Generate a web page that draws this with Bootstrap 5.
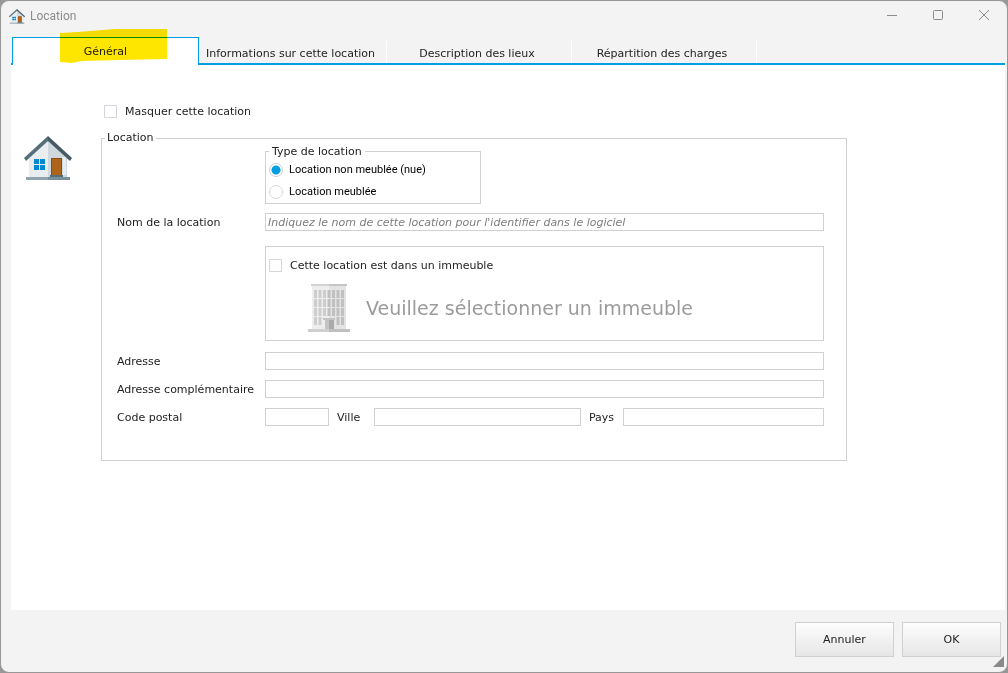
<!DOCTYPE html>
<html lang="fr">
<head>
<meta charset="utf-8">
<meta name="viewport" content="width=device-width, initial-scale=1">
<title>Location</title>
<link href="https://cdn.jsdelivr.net/npm/bootstrap@5.3.0/dist/css/bootstrap.min.css" rel="stylesheet">
<style>
:root { --accent: #009fe3; --line: #cfd0d4; --chrome: #f3f3f3; }
body { background: #979797; color: #222; font: 11px/16px "DejaVu Sans", sans-serif; }
.window { background: var(--chrome); border: 1px solid #979797; border-radius: 9px; }
.titlebar { height: 30px; padding: 0 0 0 8px; color: #8c8c8c; font: 12px/16px Roboto, sans-serif; }
.titlebar span { padding-left: 5px; }
.caption-btn { width: 46px; height: 28px; padding: 0; border: 0; background: none; color: #8c8c8c; line-height: 0; }
.tabs { margin: 6px 2px 0 10px; border-bottom: 2px solid var(--accent); height: 28px; }
.tabs .nav-item { width: 185px; border-right: 1px solid #fff; margin-top: 4px; }
.tabs .nav-item:nth-child(2) { width: 188px; }
.tabs .nav-item:first-child { width: 187px; margin: 0 0 0 1px; border: 0; }
.tabs .nav-link { width: 100%; height: 22px; margin: 0; padding: 3px 4px 0 0; border: 0; border-radius: 0; background: none; color: #222; }
.tabs .nav-link.active { height: 28px; padding: 0; border: 1px solid var(--accent); border-bottom: 0; background: #fff; color: #222; }
.marker { left: 48px; top: -8px; width: 108px; height: 35px; mix-blend-mode: multiply; pointer-events: none; }
.panel { background: #fff; margin: 0 2px 0 10px; padding: 37px 14px 24px 13px; }
.side { width: 77px; padding-top: 34px; }
.form-zone { max-width: 746px; }
.form-zone label { padding-top: 2px; }
.form-check-input { width: 13px; height: 13px; margin: 0; border: 1px solid #d5d6dd; float: none; flex: none; }
.form-check-input[type=checkbox] { border-radius: 0; }
.form-check-input[type=radio]:checked { background-color: #fff; border-color: var(--line);
  background-image: radial-gradient(circle, var(--accent) 4px, transparent 5px); }
fieldset { border: 1px solid var(--line); }
fieldset > legend { float: none; width: auto; margin: 0; font-size: 11px; line-height: 12px; }
.hide-row { padding-left: 3px; margin-bottom: 12px; }
.group { padding: 0 22px 34px 15px; }
.group > legend { margin-left: -12px; padding: 0 2px; }
.kind { width: 216px; height: 60px; padding: 6px 3px 0; margin: 0 0 9px 148px; }
.kind > legend { padding: 1px 3px 0; line-height: 13px; margin-bottom: -1px; }
.kind .form-check-input { width: 14px; height: 14px; }
.kind label { padding: 0 0 0 6px; font: 11px/14px Roboto, sans-serif; color: #000; }
.name-label { width: 148px; flex: none; }
.form-control { height: 18px; min-height: 0; padding: 0 2px; border: 1px solid var(--line); border-radius: 0; font-size: 11px; line-height: 16px; }
.form-control::placeholder { color: #7d7d7d; font-style: italic; }
.building { border: 1px solid var(--line); height: 95px; margin: 15px 0 11px 148px; padding: 9px 3px 0; }
.pick-row { margin: 10px 0 0 23px; }
.pick { color: #9b9b9b; font-size: 19px; line-height: 24px; }
.rows { gap: 10px; }
.cp { width: 64px; }
.city { flex: 207 1 0; }
.country { flex: 201 1 0; }
.city-label { width: 37px; }
.country-label { width: 34px; }
.actions { padding: 12px 6px 15px; gap: 8px; }
.actions .btn { width: 99px; height: 35px; padding: 1px 0 0; border: 1px solid #d0d0d0; border-radius: 0; color: #222; font-size: 11px; background: linear-gradient(#fdfdfd, #e6e6e6); }
.grip { right: 3px; bottom: 5px; width: 11px; height: 11px; }
</style>
</head>
<body>
<svg class="d-none" aria-hidden="true">
  <symbol id="house" viewBox="0 0 48 45">
    <path fill="#e9edef" d="M5 22 24 4v37H5z"/>
    <path fill="#cfd8dc" d="M24 4 43 22v19H24z"/>
    <path fill="#e9edef" d="M39 21h3v18h-3z"/>
    <path fill="#546e7a" d="M24 0 0 22l2 3L24 5z"/>
    <path fill="#455a64" d="M24 0l24 22-2 3L24 5z"/>
    <path fill="#0288d1" d="M10 23h5v5h-5zM16 23h5v5h-5zM10 29h5v5h-5zM16 29h5v5h-5z"/>
    <path fill="#8d4e12" d="M27 22h11v18H27z"/>
    <path fill="#ad651c" d="M28 23h9v17h-9z"/>
    <path fill="#90a4ae" d="M2 41h22v3H2z"/>
    <path fill="#78909c" d="M24 41h22v3H24z"/>
    <path fill="#546e7a" d="M26 39h13v2H26z"/>
  </symbol>
</svg>

<div class="window d-flex flex-column min-vh-100 position-relative">
  <header class="titlebar d-flex align-items-center">
    <svg width="16" height="15" aria-hidden="true"><use href="#house"/></svg>
    <span class="me-auto">Location</span>
    <button class="caption-btn" type="button" aria-label="Réduire"><svg width="12" height="12" fill="none" stroke="currentColor"><path d="M1 5.500h10"/></svg></button>
    <button class="caption-btn" type="button" aria-label="Agrandir"><svg width="12" height="12" fill="none" stroke="currentColor"><rect x="1.500" y="0.500" width="9" height="9" rx="1"/></svg></button>
    <button class="caption-btn" type="button" aria-label="Fermer"><svg width="12" height="12" fill="none" stroke="currentColor"><path d="M1 0l10 10M11 0 1 10"/></svg></button>
  </header>

  <ul class="nav tabs flex-nowrap" role="tablist">
    <li class="nav-item position-relative" role="presentation">
      <button class="nav-link active" type="button" role="tab" aria-selected="true">Général</button>
      <svg class="marker position-absolute" viewBox="0 0 108 35" aria-hidden="true"><path fill="#ffe600" d="M0 4 18 3 55 0H107V30L60 31 22 32 12 34 0 33z"/></svg>
    </li>
    <li class="nav-item" role="presentation"><button class="nav-link" type="button" role="tab">Informations sur cette location</button></li>
    <li class="nav-item" role="presentation"><button class="nav-link" type="button" role="tab">Description des lieux</button></li>
    <li class="nav-item" role="presentation"><button class="nav-link" type="button" role="tab">Répartition des charges</button></li>
  </ul>

  <main class="panel d-flex flex-grow-1">
    <div class="side flex-shrink-0">
      <svg width="48" height="45" aria-hidden="true"><use href="#house"/></svg>
    </div>
    <form class="form-zone flex-grow-1">
      <div class="hide-row d-flex align-items-center">
        <input class="form-check-input" type="checkbox" id="hide">
        <label class="ms-2" for="hide">Masquer cette location</label>
      </div>
      <fieldset class="group">
        <legend>Location</legend>
        <fieldset class="kind">
          <legend>Type de location</legend>
          <div class="d-flex align-items-center">
            <input class="form-check-input" type="radio" name="kind" id="bare" checked>
            <label for="bare">Location non meublée (nue)</label>
          </div>
          <div class="d-flex align-items-center mt-2">
            <input class="form-check-input" type="radio" name="kind" id="furnished">
            <label for="furnished">Location meublée</label>
          </div>
        </fieldset>
        <div class="d-flex align-items-center">
          <label class="name-label" for="name">Nom de la location</label>
          <input class="form-control" id="name" type="text" placeholder="Indiquez le nom de cette location pour l'identifier dans le logiciel">
        </div>
        <div class="building">
          <div class="d-flex align-items-center">
            <input class="form-check-input" type="checkbox" id="inBuilding">
            <label class="ms-2" for="inBuilding">Cette location est dans un immeuble</label>
          </div>
          <div class="pick-row d-flex align-items-center">
            <svg class="mx-3" width="42" height="48" aria-hidden="true">
              <path fill="#eee" d="M4 2h17v44H4z"/><path fill="#e3e3e3" d="M21 2h17v44H21z"/>
              <path fill="#d3d3d3" d="M3 0h18v2H3z"/><path fill="#c5c5c5" d="M21 0h18v2H21z"/>
              <path fill="#cdcdcd" d="M6 6h3v8H6zM10.500 6h3v8h-3zM15 6h3v8h-3zM6 15h3v8H6zM10.500 15h3v8h-3zM15 15h3v8h-3zM6 24h3v8H6zM10.500 24h3v8h-3zM15 24h3v8h-3zM6 33h3v8H6zM10.500 33h3v8h-3z"/>
              <path fill="#c0c0c0" d="M19.500 6h3v8h-3zM24 6h3v8h-3zM28.500 6h3v8h-3zM33 6h3v8h-3zM19.500 15h3v8h-3zM24 15h3v8h-3zM28.500 15h3v8h-3zM33 15h3v8h-3zM19.500 24h3v8h-3zM24 24h3v8h-3zM28.500 24h3v8h-3zM33 24h3v8h-3zM28.500 33h3v8h-3zM33 33h3v8h-3z"/>
              <path fill="#c4c4c4" d="M15 34h12v2H15zM17 36h4v10h-4z"/><path fill="#aaa" d="M21 36h5v10h-5z"/>
              <path fill="#cfcfcf" d="M0 45h21v3H0z"/><path fill="#c0c0c0" d="M21 45h21v3H21z"/>
            </svg>
            <span class="pick">Veuillez sélectionner un immeuble</span>
          </div>
        </div>
        <div class="rows d-flex flex-column">
          <div class="d-flex align-items-center">
            <label class="name-label" for="addr">Adresse</label>
            <input class="form-control" id="addr" type="text">
          </div>
          <div class="d-flex align-items-center">
            <label class="name-label" for="addr2">Adresse complémentaire</label>
            <input class="form-control" id="addr2" type="text">
          </div>
          <div class="d-flex align-items-center">
            <label class="name-label" for="zip">Code postal</label>
            <input class="form-control cp flex-shrink-0" id="zip" type="text">
            <label class="city-label ms-2" for="city">Ville</label>
            <input class="form-control city" id="city" type="text">
            <label class="country-label ms-2" for="country">Pays</label>
            <input class="form-control country" id="country" type="text">
          </div>
        </div>
      </fieldset>
    </form>
  </main>

  <footer class="actions d-flex justify-content-end">
    <button class="btn" type="button">Annuler</button>
    <button class="btn" type="button">OK</button>
  </footer>
  <svg class="grip position-absolute" viewBox="0 0 11 11" aria-hidden="true"><path fill="#8a8a8a" d="M11 0v11H0z"/></svg>
</div>
<script src="https://cdn.jsdelivr.net/npm/bootstrap@5.3.0/dist/js/bootstrap.bundle.min.js"></script>
</body>
</html>
